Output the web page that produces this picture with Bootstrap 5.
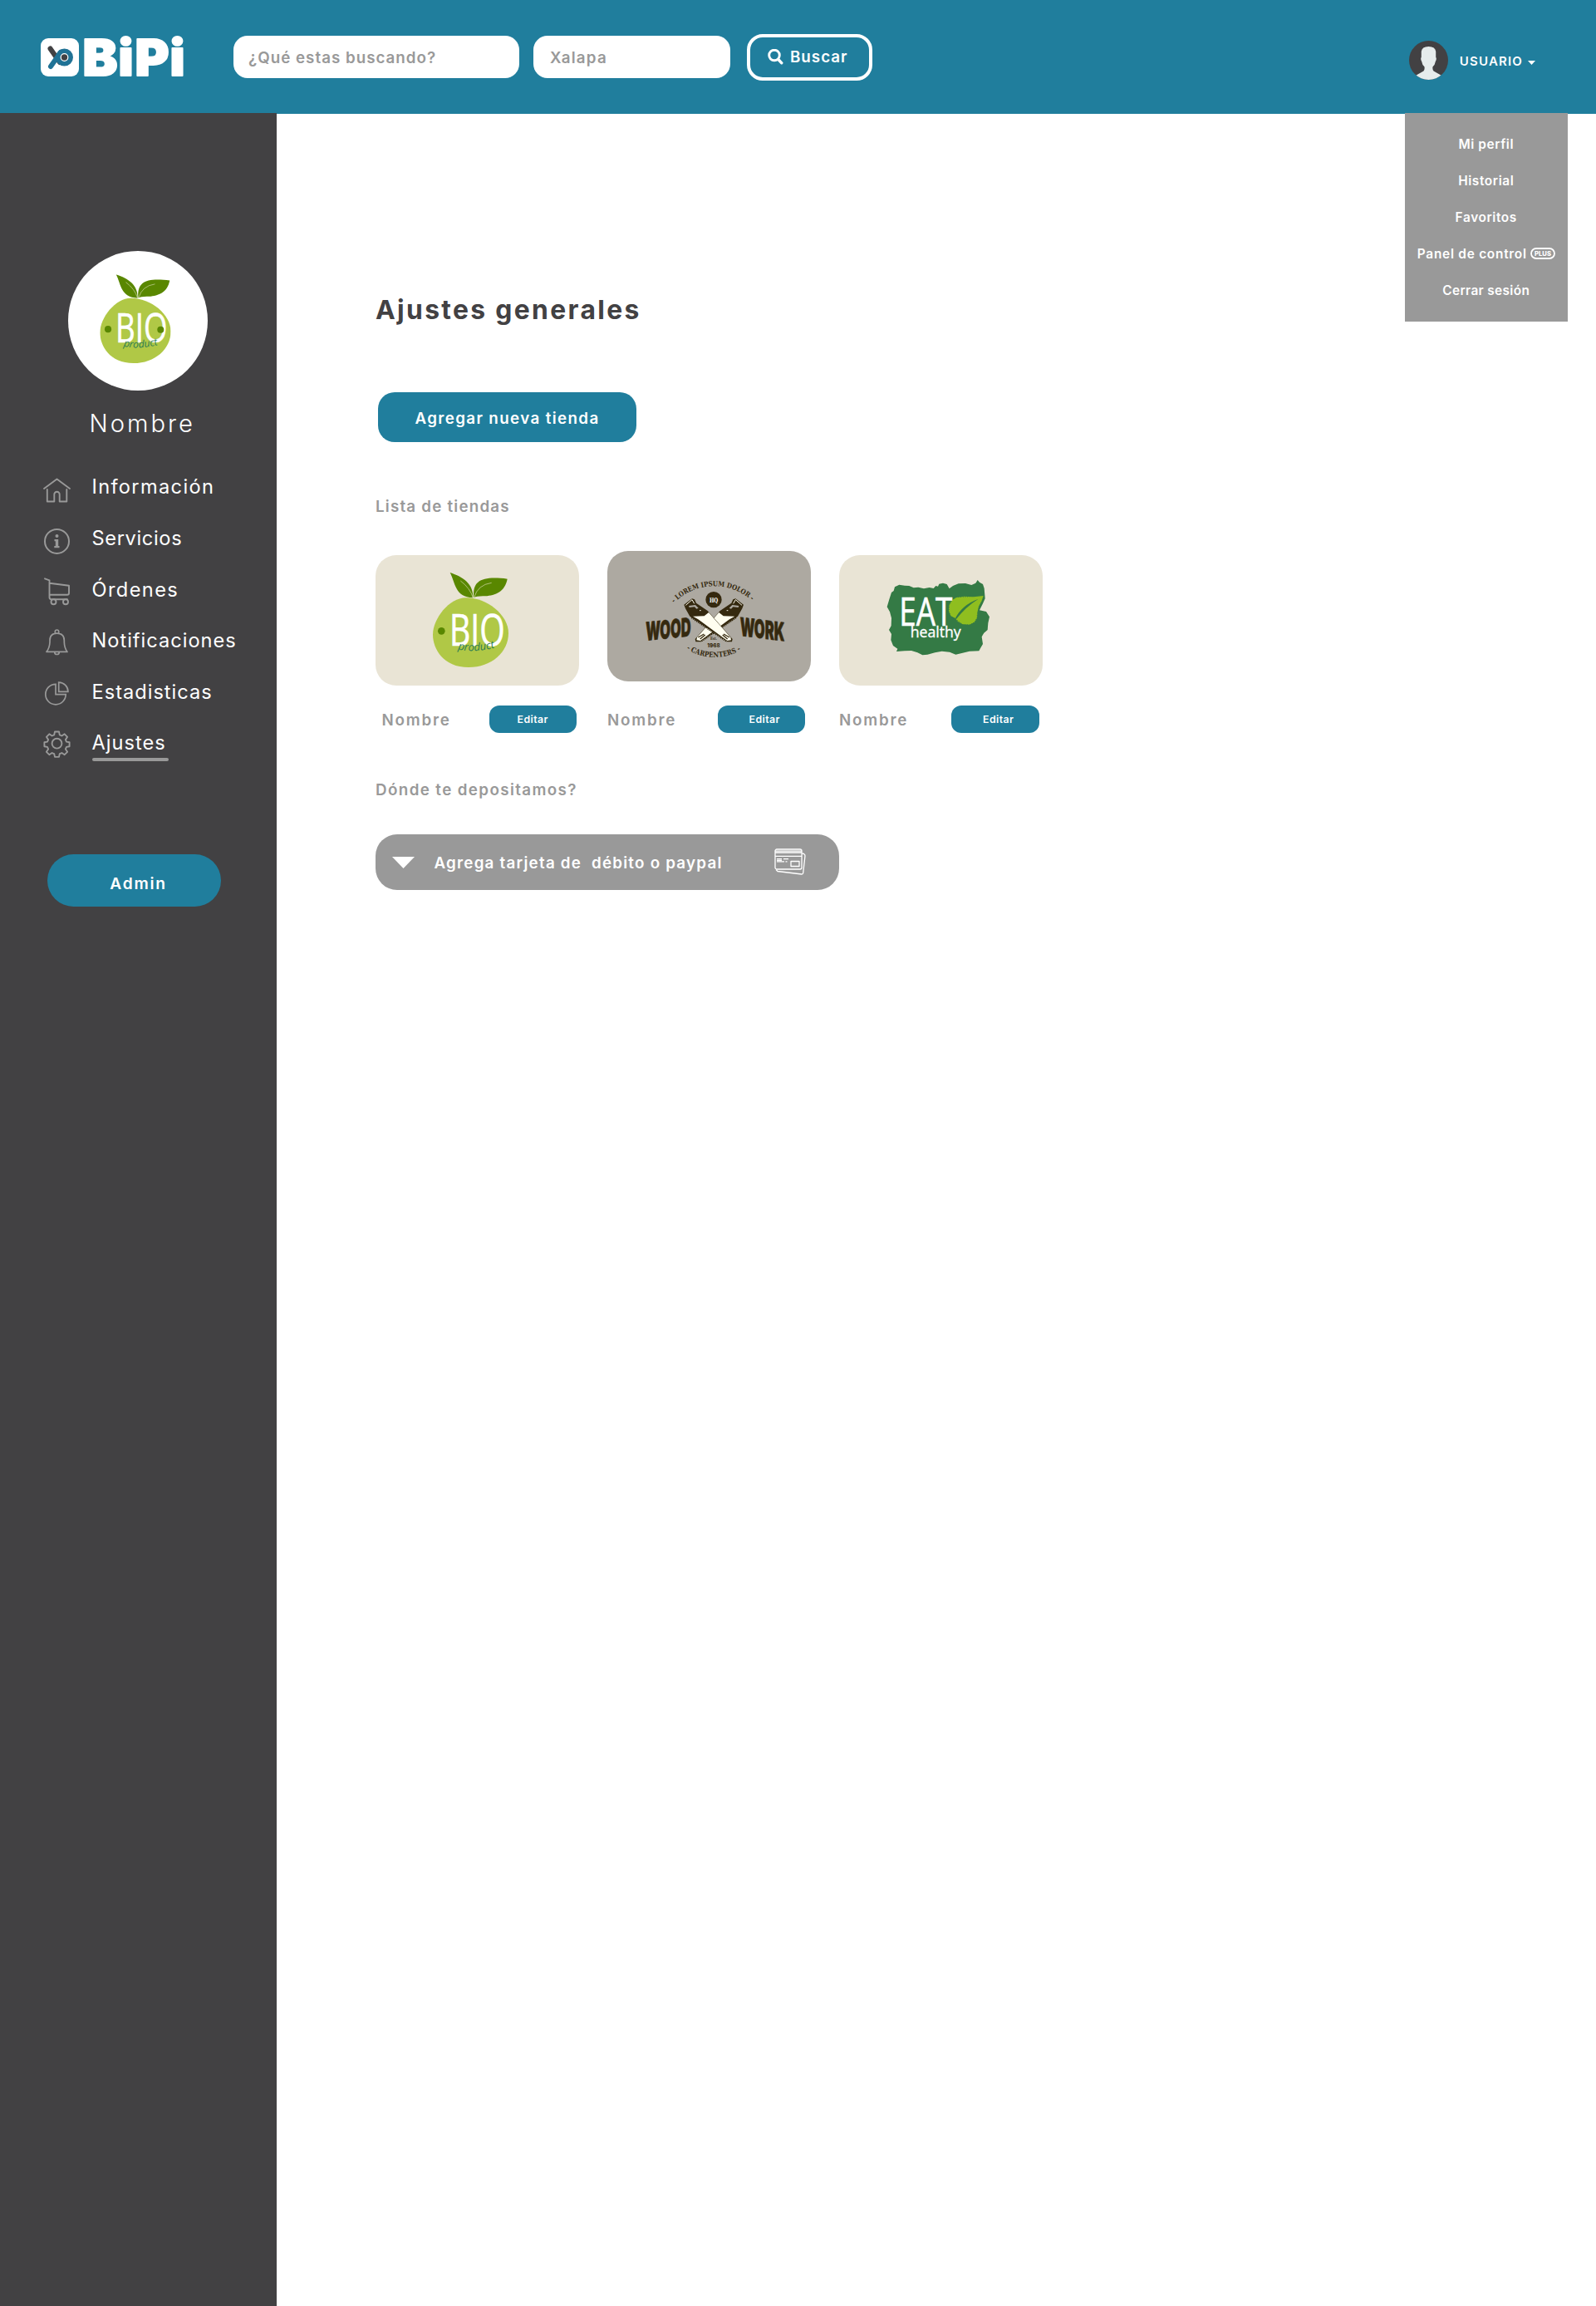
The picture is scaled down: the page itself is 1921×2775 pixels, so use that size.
<!DOCTYPE html>
<html lang="es">
<head>
<meta charset="utf-8">
<meta name="viewport" content="width=device-width, initial-scale=1">
<title>BiPi - Ajustes generales</title>
<link href="https://cdn.jsdelivr.net/npm/bootstrap@5.3.0/dist/css/bootstrap.min.css" rel="stylesheet">
<style>
:root{--teal:#207e9d;--ink:#424143;--gris:#999}
body{font-family:Inter,"Open Sans",sans-serif;background:#fff;color:var(--ink);min-height:2775px}
svg{display:block;flex-shrink:0}
.topbar{height:136px;padding:1px 73px 0 49px;background:var(--teal)}
.search-box{height:51.5px;border:0;border-radius:17px;color:var(--gris);font-size:18.8px;font-weight:600;line-height:54px;background:#fff}
.box-what{width:343.5px;margin-left:56px;padding:0 0 0 18px;letter-spacing:.99px}
.box-city{width:237px;margin-left:17.5px;padding:0 0 0 20px;letter-spacing:1.23px}
.btn-find{width:151px;height:56px;margin-left:20px;border:4px solid #fff;border-radius:19px;color:#fff;font-size:18.8px;font-weight:600;letter-spacing:.98px;padding:0 0 0 21px}
.btn-find span{padding-top:2px}
.user-toggle{margin-top:8px;color:#fff;font-size:15px;font-weight:600;letter-spacing:1.18px}
.user-toggle span{margin:3px 6px 0 13.5px}
.user-toggle .caret-down{margin-top:5px}
.user-menu{display:block;top:136px;right:34.5px;width:195.5px;height:250.5px;min-width:0;background:var(--gris);border:0;border-radius:0;padding:15px 0 0;z-index:5}
.user-menu a{height:44px;color:#fff;font-size:15.4px;font-weight:600;text-decoration:none;line-height:45px;letter-spacing:.6px}
.user-menu .panel-link{letter-spacing:.75px}
.user-menu .session-link{letter-spacing:.35px}
.sidebar{width:333px;min-height:2639px;background:var(--ink);padding-top:166px;color:#fff}
.shop-avatar{width:168px;height:168px;margin-left:82px;border-radius:50%;background:#fff}
.shop-name{font-size:29.2px;line-height:36px;font-weight:300;letter-spacing:3px;margin:22px 0 0 107.5px}
.side-nav{margin-top:27.4px;padding-left:51px}
.side-nav a{height:61.6px;color:#fff;font-size:23.6px;font-weight:400;gap:24.5px;letter-spacing:1.35px}
.side-nav a:nth-child(2){letter-spacing:.65px}
.side-nav a:nth-child(3){letter-spacing:1.4px}
.side-nav a:nth-child(n+4){letter-spacing:1px}
.side-nav .active span{position:relative}
.side-nav .active span::after{content:"";position:absolute;left:.5px;bottom:-4px;width:92px;height:3.5px;border-radius:2px;background:var(--gris)}
.btn-teal{background:var(--teal);color:#fff;border:0;font-weight:600;font-size:18.8px}
.btn-admin{width:209px;height:63px;margin:102.7px 0 0 57px;padding:8px 0 0 10px;border-radius:32px;font-size:19.2px;letter-spacing:1.8px}
.content{border-top:1px solid var(--teal);padding:216.4px 0 0 119px}
.page-title{font-size:31.8px;line-height:40px;font-weight:700;letter-spacing:2.35px;margin:0}
.btn-add{width:311px;height:60px;margin:78.6px 0 0 3px;padding:5px 0 0;border-radius:20px;letter-spacing:1.37px}
.section-label{font-size:18.8px;line-height:24px;font-weight:600;color:var(--gris);letter-spacing:1.2px;margin:0}
.label-shops{margin-top:65.6px}
.label-pay{margin-top:57.2px;letter-spacing:1.38px}
.shops{margin-top:41.4px;gap:34px}
.shop{width:245px;height:219px}
.shop-pic{height:157px;border-radius:25px;background:#e9e4d5;margin-top:5px;overflow:hidden}
.shop-pic.wood{background:#ada9a1;margin-top:0}
.shop-foot{height:33px;padding-right:4.5px}
.shop-foot .section-label{padding-top:3px;letter-spacing:1.8px}
.foot-bio{padding:0 3px 0 7.5px}
.foot-wood{padding-right:7px}
.btn-edit{width:105.5px;height:33px;border-radius:12px;font-size:12.3px;letter-spacing:.44px;padding:1px 0 0}
.pay{width:558px;height:67px;margin-top:40.8px;border-radius:26px;background:var(--gris);color:#fff;font-size:18.8px;font-weight:600;padding:0 40px 0 19.5px;letter-spacing:1.22px}
.pay span{padding-top:3px;margin-left:24px;white-space:pre}
</style>
</head>
<body>
<header class="topbar d-flex align-items-center">
  <svg width="176" height="76" viewBox="49 30 176 76">
    <rect x="49" y="45" width="46" height="46" rx="9" fill="#fff"/>
    <path d="M60.500 57.500L72 74" stroke="#424143" stroke-width="6" stroke-linecap="round"/>
    <path d="M61 79L73 62" stroke="#207295" stroke-width="6" stroke-linecap="round"/>
    <circle cx="77.500" cy="68" r="7.700" fill="#fff" stroke="#207295" stroke-width="5.600"/>
    <circle cx="77.500" cy="68" r="3.700" fill="#424143"/>
    <text y="90" fill="#fff" stroke="#fff" stroke-width="2" stroke-linejoin="round" font-family="Inter,sans-serif" font-weight="900" font-size="60"><tspan x="99.500" textLength="42" lengthAdjust="spacingAndGlyphs">B</tspan><tspan x="142.500" textLength="18" lengthAdjust="spacingAndGlyphs">i</tspan><tspan x="162.500" textLength="41" lengthAdjust="spacingAndGlyphs">P</tspan><tspan x="204.500" textLength="18" lengthAdjust="spacingAndGlyphs">i</tspan></text>
  </svg>
  <div class="search-box box-what" role="textbox">¿Qué estas buscando?</div>
  <div class="search-box box-city" role="textbox">Xalapa</div>
  <button class="btn btn-find d-flex align-items-center" type="button">
    <svg class="me-2" width="19" height="20" viewBox="0 0 19 20" fill="none" stroke="#fff" stroke-linecap="round"><circle cx="8" cy="7.500" r="6.300" stroke-width="2.900"/><path d="M12.800 12.500l4 4.300" stroke-width="3.400"/></svg>
    <span>Buscar</span>
  </button>
  <div class="user-toggle d-flex align-items-center ms-auto">
    <svg width="47" height="47" viewBox="172 147 140 140"><defs><clipPath id="face"><circle cx="242" cy="217" r="70"/></clipPath></defs><circle cx="242" cy="217" r="70" fill="#424143"/><path clip-path="url(#face)" fill="#e6ecec" d="M190 290V275L224 256Q229 250 227 240Q219 234 217 221Q212 212 216 206V186Q218 168 242 168Q266 168 268 186V206Q272 212 267 221Q265 234 257 240Q255 250 260 256L294 275V290Z"/></svg>
    <span>USUARIO</span>
    <svg class="caret-down" width="9" height="5" viewBox="0 0 9 5"><path d="M0 0h9L4.500 5z" fill="#fff"/></svg>
  </div>
</header>
<nav class="user-menu dropdown-menu position-absolute">
  <a class="d-flex justify-content-center" href="#">Mi perfil</a>
  <a class="d-flex justify-content-center" href="#">Historial</a>
  <a class="d-flex justify-content-center" href="#">Favoritos</a>
  <a class="panel-link d-flex justify-content-center align-items-center" href="#"><span>Panel de control</span>
    <svg class="ms-1" width="30" height="14" viewBox="0 0 30 14"><rect x="1" y="1" width="28" height="12" rx="6" fill="none" stroke="#fff" stroke-width="1.800"/><text x="5" y="9.700" fill="#fff" font-family="Inter,sans-serif" font-weight="800" font-size="7" letter-spacing="0" textLength="20" lengthAdjust="spacingAndGlyphs">PLUS</text></svg></a>
  <a class="session-link d-flex justify-content-center" href="#">Cerrar sesión</a>
</nav>
<div class="d-flex align-items-stretch">
  <aside class="sidebar flex-shrink-0">
    <div class="shop-avatar">
      <svg width="168" height="168" viewBox="82 302 168 168">
        <defs>
          <symbol id="bio" viewBox="243 118 273 342">
            <path fill="#b0c846" d="M362 209C440 209 516 272 516 337C516 405 455 460 372 460C280 460 243 392 243 342C243 285 302 209 362 209Z"/>
            <path fill="#598700" d="M305 118C352 134 390 158 388 209C322 206 325 156 305 118ZM391 208C384 142 428 131 512 141C503 187 470 200 432 203Q402 202 391 208Z"/>
            <path fill="none" stroke="#d9deb4" stroke-width="2" d="M343 148Q378 175 388 209M455 155Q405 162 392 208"/>
            <circle cx="274" cy="329" r="13" fill="#598700"/>
            <text x="303" y="381" fill="#fff" stroke="#fff" stroke-width="2" font-family="'Open Sans',sans-serif" font-size="158" textLength="200" lengthAdjust="spacingAndGlyphs">BIO</text>
            <path id="bio-curve" d="M333 395Q410 414 520 372" fill="none"/>
            <text fill="#2c7d52" font-family="'Open Sans',sans-serif" font-style="italic" font-size="39"><textPath href="#bio-curve">product</textPath></text>
          </symbol>
        </defs>
        <use href="#bio" x="120.300" y="330.300" width="85.300" height="106.700"/>
        <circle cx="193.300" cy="396.700" r="4" fill="#598700"/>
      </svg>
    </div>
    <p class="shop-name">Nombre</p>
    <nav class="side-nav nav flex-column">
      <a class="d-flex align-items-center text-decoration-none" href="#"><svg width="35" height="40" viewBox="51 566.500 35 40" fill="none" stroke="#999" stroke-width="1.900" stroke-linecap="round" stroke-linejoin="round"><path d="M53 588.500L68.500 577L84 588.500M56.800 589.500V604H65.300V595.500a3.200 3.200 0 0 1 6.400 0V604H80.300V589.500"/></svg><span>Información</span></a>
      <a class="d-flex align-items-center text-decoration-none" href="#"><svg width="35" height="40" viewBox="51 628.100 35 40"><circle cx="68.500" cy="651.500" r="14.500" fill="none" stroke="#999" stroke-width="2"/><circle cx="68.500" cy="645.200" r="2" fill="#999"/><path fill="#999" d="M65.500 649h4.700v8h1.300v2.300h-6.200V657h1.500v-5.600h-1.300z"/></svg><span>Servicios</span></a>
      <a class="d-flex align-items-center text-decoration-none" href="#"><svg width="35" height="40" viewBox="51 689.700 35 40" fill="none" stroke="#999" stroke-width="1.900" stroke-linecap="round" stroke-linejoin="round"><path d="M54 697L59.500 699V719.500Q59.500 722 62 722H81M59.500 702.500L83 705.500V714.500Q83 716.500 81 716.500H59.500"/><circle cx="64.500" cy="725" r="3" fill="#424143"/><circle cx="79" cy="725" r="3" fill="#424143"/></svg><span>Órdenes</span></a>
      <a class="d-flex align-items-center text-decoration-none" href="#"><svg width="35" height="40" viewBox="51 751.300 35 40" fill="none" stroke="#999" stroke-width="1.700" stroke-linejoin="round"><path d="M56 784.700H81Q77.500 780 77.300 773V771Q77.300 762.500 68.500 762.500Q60 762.500 60 771V773Q59.700 780 56 784.700ZM66.300 762.500V760.500a2.200 2.200 0 0 1 4.400 0V762.500M65.700 785a2.800 2.800 0 0 0 5.600 0"/></svg><span>Notificaciones</span></a>
      <a class="d-flex align-items-center text-decoration-none" href="#"><svg width="35" height="40" viewBox="51 812.900 35 40" fill="none" stroke="#999" stroke-width="1.700"><path d="M67 823.300A12.200 12.200 0 1 0 79.200 835.500H67ZM70.700 821V832.200H81.900A11.200 11.200 0 0 0 70.700 821Z"/></svg><span>Estadisticas</span></a>
      <a class="active d-flex align-items-center text-decoration-none" href="#"><svg width="35" height="40" viewBox="51 874.500 35 40" fill="none" stroke="#999" stroke-width="1.900" stroke-linejoin="round"><circle cx="68.500" cy="895.200" r="5.900"/><path d="M66 881h5l.8 3.900 2.600 1.100 3.300-2.200 3.400 3.500-2.200 3.300 1.100 2.500 3.600.7v4.900l-3.600.7-1.100 2.500 2.200 3.400-3.400 3.400-3.300-2.200-2.600 1.100-.8 3.800h-5l-.8-3.800-2.600-1.100-3.300 2.200-3.400-3.400 2.200-3.400-1.100-2.500-3.600-.7v-4.900l3.600-.7 1.100-2.500-2.200-3.300 3.400-3.500 3.300 2.200 2.600-1.100z"/></svg><span>Ajustes</span></a>
    </nav>
    <button class="btn btn-teal btn-admin" type="button">Admin</button>
  </aside>
  <main class="content flex-grow-1">
    <h1 class="page-title">Ajustes generales</h1>
    <button class="btn btn-teal btn-add d-block" type="button">Agregar nueva tienda</button>
    <h2 class="section-label label-shops">Lista de tiendas</h2>
    <div class="shops d-flex">
      <article class="shop d-flex flex-column">
        <div class="shop-pic"><svg width="245" height="157" viewBox="36 55 735 471"><use href="#bio" x="243" y="118" width="273" height="342"/></svg></div>
        <div class="shop-foot foot-bio d-flex mt-auto justify-content-between align-items-center"><p class="section-label">Nombre</p><button class="btn btn-teal btn-edit" type="button">Editar</button></div>
      </article>
      <article class="shop d-flex flex-column">
        <div class="shop-pic wood"><svg width="245" height="157" viewBox="62 40 735 471">
          <defs>
            <path id="arc-top" d="M303 228A202 202 0 0 1 600 236"/>
            <path id="arc-bottom" d="M348 394A188 188 0 0 0 556 390"/>
            <g id="saw">
              <path fill="#35290f" d="M339 234L368 212L377 215L383 228L424 256L514 358L512 368L496 368L360 276L344 248Z"/>
              <path fill="#fffef0" d="M371 276L412 275L428 262L507 352L509 362L495 364L390 287Z"/>
              <path fill="#ada9a1" d="M356 238L380 235L391 246L384 249L377 242L358 244Z"/>
              <path fill="none" stroke="#fffef0" stroke-width="3" d="M345 236L368 216L376 230M395 255h5"/>
              <path fill="none" stroke="#35290f" stroke-width="4" d="M482 340L503 352M478 343L496 358"/>
              <path fill="none" stroke="#35290f" stroke-width="5" stroke-dasharray="4 3" d="M366 281L494 368"/>
            </g>
          </defs>
          <g fill="#35290f" font-family="'DejaVu Serif','Liberation Serif',serif" font-weight="700">
            <text font-size="25"><textPath href="#arc-top" textLength="310" lengthAdjust="spacingAndGlyphs">- LOREM IPSUM DOLOR -</textPath></text>
            <use href="#saw" transform="translate(893 0) scale(-1 1)"/><use href="#saw"/>
            <circle cx="446" cy="216" r="29"/>
            <text x="431" y="225" font-size="23" fill="#fff" textLength="31" lengthAdjust="spacingAndGlyphs">HQ</text>
            <text x="434" y="362" font-size="14" textLength="24" lengthAdjust="spacingAndGlyphs">Est.</text>
            <text x="423" y="387" font-size="20" font-family="Inter,sans-serif" font-weight="800" textLength="46" lengthAdjust="spacingAndGlyphs">1968</text>
            <text font-size="26"><textPath href="#arc-bottom" textLength="206" lengthAdjust="spacingAndGlyphs">- CARPENTERS -</textPath></text>
            <g font-family="Inter,sans-serif" font-weight="900" font-size="92" stroke="#35290f" stroke-width="2" stroke-linejoin="round">
              <text transform="translate(201 364) skewY(-6)" textLength="163" lengthAdjust="spacingAndGlyphs">WOOD</text>
              <text transform="translate(541 346) skewY(7)" textLength="161" lengthAdjust="spacingAndGlyphs">WORK</text>
            </g>
          </g></svg></div>
        <div class="shop-foot foot-wood d-flex mt-auto justify-content-between align-items-center"><p class="section-label">Nombre</p><button class="btn btn-teal btn-edit ps-2" type="button">Editar</button></div>
      </article>
      <article class="shop d-flex flex-column">
        <div class="shop-pic"><svg width="245" height="157" viewBox="59 55 735 471">
          <path fill="#347a45" d="M248 190L256 184L260 170L276 162L296 165L312 166L328 173L345 171L365 176L385 172L400 175L408 166L416 168L420 159L434 156L448 160L457 176L470 166L490 158L515 157L537 163L552 156L559 145L566 153L578 160L583 175L586 212L578 230L566 254L590 259L602 278L597 300L595 325L582 336L574 350L578 376L571 388L564 401L530 402L505 408L480 414L458 405L430 402L405 407L378 414L360 416L342 407L320 400L295 401L266 403L270 393L254 382L246 362L248 340L239 325L247 310L248 282L242 260L232 242L240 215Z"/>
          <path fill="#8fbe1f" d="M580 202L573 222L563 240L559 260L557 282L548 297L530 306L505 305L488 295L478 283L462 275L455 258L456 236L466 218L482 208L510 204L545 206Z"/>
          <path fill="#347a45" d="M478 284Q502 235 562 213Q516 242 482 286Z"/>
          <path fill="none" stroke="#347a45" stroke-width="3" stroke-dasharray="3 5" d="M572 225L559 260L557 282L548 297L530 307L505 306L478 284L462 276L455 258L456 236L466 218L482 207L545 204"/>
          <g fill="#fff" stroke="#fff" font-family="'Open Sans',sans-serif"><text x="276" y="311" font-size="144" stroke-width="2" textLength="192" lengthAdjust="spacingAndGlyphs">EAT</text><text x="316" y="353" font-size="54" stroke-width="1" textLength="183" lengthAdjust="spacingAndGlyphs">healthy</text></g></svg></div>
        <div class="shop-foot d-flex mt-auto justify-content-between align-items-center"><p class="section-label">Nombre</p><button class="btn btn-teal btn-edit ps-2" type="button">Editar</button></div>
      </article>
    </div>
    <h2 class="section-label label-pay">Dónde te depositamos?</h2>
    <div class="pay d-flex align-items-center">
      <svg width="27" height="15" viewBox="0 0 27 15"><path d="M0 1h27L13.500 15z" fill="#fff"/></svg>
      <span>Agrega tarjeta de  débito o paypal</span>
      <svg class="ms-auto" width="38" height="32" viewBox="0 0 38 32" fill="none" stroke="#fff" stroke-width="1.300" stroke-linejoin="round"><rect x="1" y="1" width="32" height="24" rx="2"/><path d="M1 3.200h32M1 5h32M1 9.300h32M3 12.700h6M11 12.700h6M3 14.300h6M3 15.900h9M13.500 15.900h2M2 25.500L4 27.500L33 31Q34.500 31 34.700 29.500L37 9Q37 7 35.500 6.500L33.500 6"/><rect x="20" y="15.500" width="10" height="6"/></svg>
    </div>
  </main>
</div>
<script src="https://cdn.jsdelivr.net/npm/bootstrap@5.3.0/dist/js/bootstrap.bundle.min.js"></script>
</body>
</html>
